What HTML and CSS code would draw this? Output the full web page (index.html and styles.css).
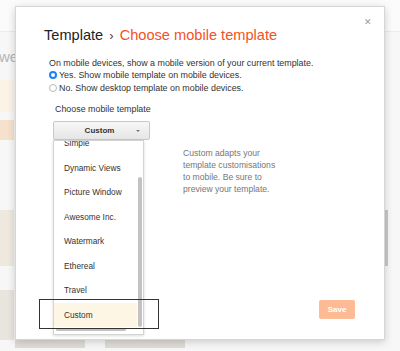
FILE: index.html
```
<!DOCTYPE html>
<html lang="en">

<head>
    <meta charset="UTF-8">
    <meta name="viewport" content="width=device-width, initial-scale=1.0">
    <title>Choose mobile template</title>
    <link rel="stylesheet" href="styles.css">
</head>

<body>
    <div class="page">
        <div class="page-top"></div>
        <div class="page-word">we</div>
        <div class="thumb t1"></div>
        <div class="thumb t2"></div>
        <div class="thumb t3"></div>
        <div class="thumb t4"></div>
        <div class="strip s1"></div>
        <div class="strip s2"></div>
        <div class="page-scroll"></div>
    </div>

    <div class="dialog">
        <span class="close">&#x2715;</span>

        <h1 class="title">Template <span class="sep">&#x203A;</span> <span class="sub">Choose mobile template</span></h1>

        <div class="intro">
            <p>On mobile devices, show a mobile version of your current template.</p>
            <label class="radio"><span class="dot checked"></span>Yes. Show mobile template on mobile devices.</label>
            <label class="radio"><span class="dot"></span>No. Show desktop template on mobile devices.</label>
        </div>

        <div class="choose">
            <div class="picker">
                <div class="picker-label">Choose mobile template</div>
                <div class="select">
                    <span>Custom</span>
                    <i class="arrow"></i>
                </div>

                <div class="menu">
                    <ul>
                        <li>Simple</li>
                        <li>Dynamic Views</li>
                        <li>Picture Window</li>
                        <li>Awesome Inc.</li>
                        <li>Watermark</li>
                        <li>Ethereal</li>
                        <li>Travel</li>
                        <li class="current">Custom</li>
                    </ul>
                    <div class="vbar"></div>
                    <div class="hbar"></div>
                </div>
                <div class="focus"></div>
            </div>

            <p class="desc">Custom adapts your template customisations to mobile. Be sure to preview your template.</p>
        </div>

        <div class="actions">
            <button class="save">Save</button>
        </div>
    </div>
</body>

</html>
```

FILE: styles.css
```
* {
    box-sizing: border-box;
}

body {
    margin: 0;
    width: 400px;
    height: 351px;
    overflow: hidden;
    background: #f7f7f7;
    font-family: "Liberation Sans", Arial, sans-serif;
    color: #222;
}

/* faded page behind the dialog */
.page {
    position: relative;
    width: 400px;
    height: 351px;
}

.page-top {
    height: 32px;
    background: #fbfbfb;
    border-bottom: 1px solid #ececec;
}

.page-word {
    position: absolute;
    left: -1px;
    top: 48px;
    font-size: 15px;
    color: #b5b5b5;
}

.thumb {
    position: absolute;
    left: 0;
    width: 14px;
}

.t1 {
    top: 80px;
    height: 32px;
    background: #fbf3e6;
}

.t2 {
    top: 120px;
    height: 20px;
    background: #f6e2cc;
}

.t3 {
    top: 210px;
    height: 56px;
    background: #eee8df;
}

.t4 {
    top: 290px;
    height: 50px;
    background: #e8e4de;
}

.strip {
    position: absolute;
    bottom: 3px;
    height: 8px;
    background: #e0ddd8;
}

.s1 {
    left: 15px;
    width: 70px;
}

.s2 {
    left: 105px;
    width: 80px;
}

.page-scroll {
    position: absolute;
    left: 385px;
    top: 210px;
    width: 3px;
    height: 56px;
    background: #c8c8c8;
}

/* dialog */
.dialog {
    position: absolute;
    left: 15px;
    top: 6px;
    width: 370px;
    height: 334px;
    background: #fff;
    border: 1px solid #d6d6d6;
    box-shadow: 0 2px 8px rgba(0, 0, 0, .18);
    padding: 17px 28px 0;
    display: flex;
    flex-direction: column;
}

.close {
    position: absolute;
    right: 12px;
    top: 10px;
    font-size: 9px;
    color: #999;
}

.title {
    margin: 0;
    font-size: 14.6px;
    font-weight: normal;
    line-height: 22px;
    color: #222;
}

.title .sep {
    font-size: 13px;
    margin: 0 2px;
    color: #444;
}

.title .sub {
    color: #f4511e;
}

.intro {
    margin: 9.5px 0 0 5px;
    font-size: 8.9px;
    line-height: 12.5px;
    color: #333;
    white-space: nowrap;
}

.intro p {
    margin: 0;
}

.radio {
    display: flex;
    align-items: center;
}

.dot {
    width: 8px;
    height: 8px;
    border-radius: 50%;
    border: 1px solid #b8b8b8;
    margin-right: 2px;
    background: #fff;
}

.dot.checked {
    border: 2.5px solid #1a82fb;
}

.choose {
    display: flex;
    margin-top: 9px;
    margin-left: 9px;
}

.picker {
    position: relative;
    flex: none;
    width: 97px;
}

.picker-label {
    font-size: 8.9px;
    line-height: 12px;
    color: #333;
    padding-left: 2px;
    white-space: nowrap;
}

.select {
    position: relative;
    margin-top: 6px;
    height: 19px;
    border: 1px solid #c8c8c8;
    border-radius: 2px;
    background: linear-gradient(#f7f7f7, #e6e6e6);
    font-size: 8px;
    font-weight: bold;
    line-height: 17px;
    text-align: center;
    color: #333;
    padding-right: 4px;
}

.arrow {
    position: absolute;
    right: 9px;
    top: 8px;
    border: 2px solid transparent;
    border-top: 2px solid #777;
}

.menu {
    position: absolute;
    left: 0;
    top: 37px;
    width: 91px;
    height: 195px;
    background: #fff;
    border: 1px solid #d4d4d4;
    box-shadow: 0 1px 3px rgba(0, 0, 0, .15);
    overflow: hidden;
}

.menu ul {
    list-style: none;
    margin: -10px 0 0;
    padding: 0;
}

.menu li {
    height: 24.5px;
    line-height: 24.5px;
    padding-left: 10px;
    font-size: 8.3px;
    color: #333;
    margin-right: 6px;
}

.menu li.current {
    background: #fdf6e4;
}

.vbar {
    position: absolute;
    right: 1px;
    top: 36px;
    width: 4px;
    height: 150px;
    border-radius: 2px;
    background: #c2c2c2;
}

.hbar {
    position: absolute;
    left: 2px;
    bottom: 3px;
    width: 70px;
    height: 3px;
    border-radius: 2px;
    background: #c2c2c2;
}

.focus {
    position: absolute;
    left: -14px;
    top: 196px;
    width: 120px;
    height: 30px;
    border: 1px solid #333;
}

.desc {
    margin: 44px 0 0 33px;
    width: 100px;
    font-size: 8.6px;
    line-height: 12px;
    color: #777;
}

.actions {
    margin-top: auto;
    margin-bottom: 20px;
    display: flex;
    justify-content: flex-end;
    margin-right: 1px;
}

.save {
    width: 36px;
    height: 19px;
    border: 0;
    border-radius: 2px;
    background: #fdbb95;
    color: #fff;
    font-family: "Liberation Sans", Arial, sans-serif;
    font-size: 8px;
    font-weight: bold;
    padding: 0;
}
```
